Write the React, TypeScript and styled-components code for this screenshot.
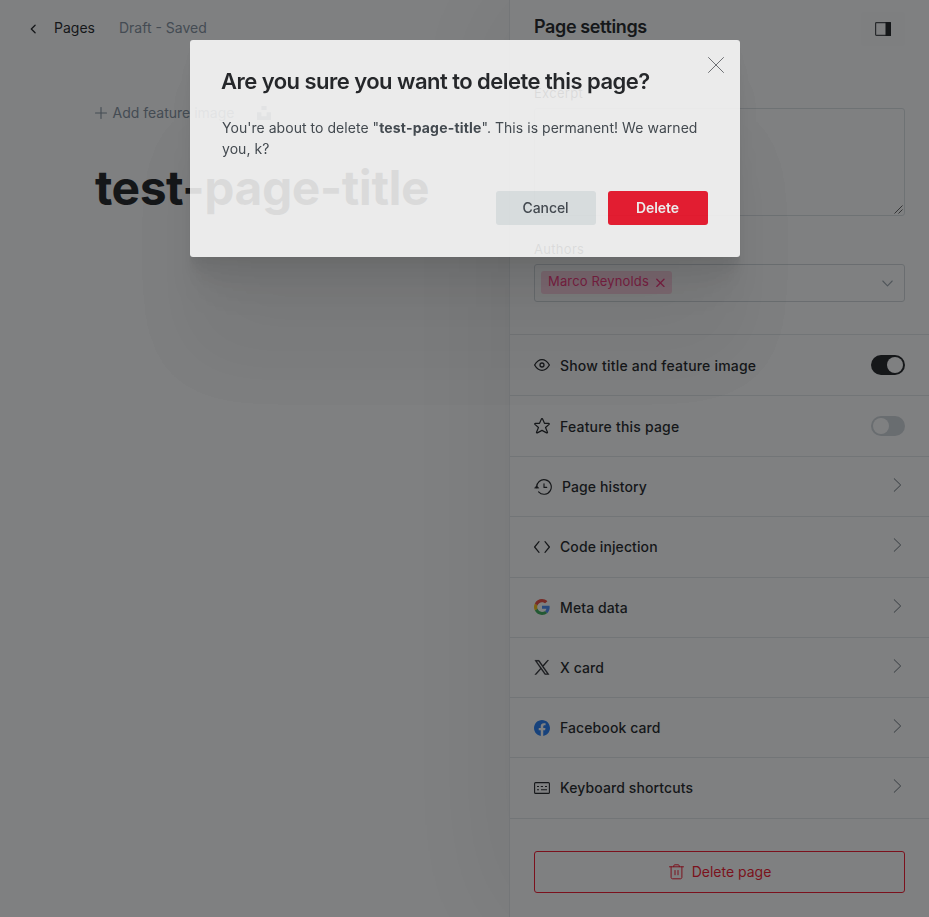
import React from 'react';
import styled, { createGlobalStyle } from 'styled-components';

const GlobalStyle = createGlobalStyle`
  *, *::before, *::after { box-sizing: border-box; }
  html, body { margin: 0; padding: 0; }
  body {
    font-family: Inter, "Liberation Sans", sans-serif;
    font-size: 14px;
    color: #15171a;
    background: #fff;
    overflow: hidden;
  }
  button { font-family: inherit; border: 0; padding: 0; margin: 0; }
  svg { display: block; flex: none; }
`;

const Screen = styled.div`
  display: flex;
  height: 917px;
  overflow: hidden;
`;

/* ---------- editor ---------- */

const Editor = styled.main`
  flex: 1;
  min-width: 0;
`;

const EditorHeader = styled.header`
  display: flex;
  align-items: center;
  height: 56px;
  padding: 0 0 2px 30px;
`;

const BackLink = styled.a`
  display: flex;
  align-items: center;
  gap: 17px;
  font-size: 14px;
  color: #15171a;
`;

const BackIcon = styled.svg`
  margin-top: 3px;
`;

const Status = styled.span`
  margin-left: 24px;
  font-size: 14px;
  color: #7c8b9a;
`;

const Canvas = styled.div`
  padding: 46px 0 0 95px;
  white-space: nowrap;
`;

const FeatureImageRow = styled.div`
  display: flex;
  align-items: center;
  height: 22px;
  font-size: 14px;
  color: #7c8b9a;
`;

const FeatureImageLabel = styled.span`
  margin: 0 23px 2px 5.5px;
`;

const PostTitle = styled.h1`
  margin: 34px 0 0;
  font-size: 48px;
  line-height: 60px;
  font-weight: 700;
  letter-spacing: -0.5px;
`;

/* ---------- settings panel ---------- */

const Panel = styled.aside`
  display: flex;
  flex-direction: column;
  width: 420px;
  flex: none;
  border-left: 1px solid #e6e9eb;
  background: #fff;
  box-shadow: 0 0 120px rgba(0, 0, 0, 0.09);
`;

const PanelHeader = styled.div`
  display: flex;
  justify-content: space-between;
  align-items: flex-start;
  height: 84px;
  padding: 12px 24px 0;
`;

const PanelTitle = styled.h4`
  margin: 0;
  font-size: 18px;
  line-height: 30px;
  font-weight: 600;
  letter-spacing: -0.38px;
`;

const PanelToggle = styled.div`
  display: flex;
  align-items: center;
  justify-content: center;
  width: 44px;
  height: 34px;
  border-radius: 3px;
  background: #fcfcfd;
`;

const Field = styled.div<{ $gap: number }>`
  display: flex;
  flex-direction: column;
  padding: 0 24px;
  margin-bottom: ${(p) => p.$gap}px;
`;

const Label = styled.label`
  font-size: 13px;
  line-height: 18px;
  height: 24px;
  font-weight: 400;
  letter-spacing: 0.3px;
`;

const ExcerptBox = styled.div`
  display: flex;
  align-items: flex-end;
  justify-content: flex-end;
  height: 108px;
  padding: 0 1px 1px 0;
  border: 1px solid #dadfe3;
  border-radius: 3px;
`;

const AuthorSelect = styled.div`
  display: flex;
  align-items: center;
  justify-content: space-between;
  height: 38px;
  padding: 0 11px 0 6px;
  border: 1px solid #d0d6da;
  border-radius: 3px;
`;

const Token = styled.span`
  display: flex;
  align-items: center;
  gap: 7px;
  height: 23px;
  margin-bottom: 1px;
  padding: 0 7px;
  border-radius: 3px;
  font-size: 13px;
  letter-spacing: 0.15px;
  color: #fb2d78;
  background: rgba(251, 45, 120, 0.22);
`;

const TokenName = styled.span`
  margin-top: -3px;
`;

const Rows = styled.ul`
  list-style: none;
  margin: 0;
  padding: 0;
  border-top: 1px solid #e3e6e8;
`;

const Row = styled.li<{ $h: number }>`
  display: flex;
  align-items: center;
  height: ${(p) => p.$h}px;
  padding: 0 24px;
  border-bottom: 1px solid #e3e6e8;
`;

const RowText = styled.span<{ $link?: boolean }>`
  flex: 1;
  margin-left: 10px;
  padding-top: ${(p) => (p.$link ? 1 : 2)}px;
  font-size: 14px;
  font-weight: 500;
  line-height: 20px;
  letter-spacing: ${(p) => (p.$link ? 0.1 : 0.2)}px;
`;

const RowArrow = styled.span`
  margin: -3px 3px 0 0;
`;

const Switch = styled.span<{ $on: boolean }>`
  display: flex;
  justify-content: ${(p) => (p.$on ? 'flex-end' : 'flex-start')};
  width: 34px;
  height: 20px;
  padding: 2px;
  border-radius: 10px;
  background: ${(p) => (p.$on ? '#15171a' : '#ced4d9')};
`;

const Knob = styled.span`
  width: 16px;
  height: 16px;
  border-radius: 50%;
  background: #fff;
`;

const DeletePage = styled.button`
  display: flex;
  align-items: center;
  justify-content: center;
  gap: 8px;
  height: 42px;
  margin: 32px 24px 0;
  padding-left: 1px;
  border: 1px solid #f50b23;
  border-radius: 3px;
  background: transparent;
  color: #f50b23;
  font-size: 14px;
`;

/* ---------- modal ---------- */

const Backdrop = styled.div`
  position: fixed;
  inset: 0;
  background: rgba(21, 23, 26, 0.55);
`;

const ModalLayer = styled.div`
  position: fixed;
  inset: 0;
  display: flex;
  justify-content: center;
  align-items: flex-start;
  padding-top: 40px;
  padding-left: 1px;
`;

const Modal = styled.section`
  position: relative;
  width: 550px;
  height: 217px;
  padding: 25px 32px 32px;
  border-radius: 3px;
  background: #fff;
  opacity: 0.845;
  box-shadow:
    0 2.8px 2.2px rgba(0, 0, 0, 0.02),
    0 6.7px 5.3px rgba(0, 0, 0, 0.028),
    0 12.5px 10px rgba(0, 0, 0, 0.035),
    0 22.3px 17.9px rgba(0, 0, 0, 0.042),
    0 41.8px 33.4px rgba(0, 0, 0, 0.05),
    0 100px 80px rgba(0, 0, 0, 0.07);
`;

const ModalTitle = styled.h2`
  margin: 0 0 0 -1px;
  font-size: 22px;
  line-height: 32px;
  font-weight: 600;
  letter-spacing: -0.53px;
  white-space: nowrap;
`;

const ModalText = styled.p`
  margin: 20px 0 0;
  font-size: 14px;
  line-height: 21px;
  letter-spacing: 0.04px;
  color: #394047;

  strong { letter-spacing: 0.18px; }
`;

const ModalActions = styled.div`
  display: flex;
  justify-content: flex-end;
  gap: 12px;
  margin-top: 32px;
`;

const ModalButton = styled.button<{ $danger?: boolean }>`
  width: 100px;
  height: 34px;
  padding: 0 1px 1px 0;
  border-radius: 3px;
  font-size: 14px;
  font-weight: ${(p) => (p.$danger ? 600 : 500)};
  letter-spacing: -0.1px;
  color: ${(p) => (p.$danger ? '#fff' : '#394047')};
  background: ${(p) => (p.$danger ? '#f50b23' : '#e8edef')};
`;

const CloseButton = styled.span`
  position: absolute;
  top: 17px;
  right: 16px;
`;

/* ---------- icons ---------- */

const line = { fill: 'none', stroke: 'currentColor', strokeLinecap: 'round', strokeLinejoin: 'round' } as const;

const EyeIcon = () => (
  <svg width="16" height="16" viewBox="0 0 24 24" {...line} strokeWidth="1.900">
    <path d="M23.100 12s-4.700-8-11.100-8S.9 12 .9 12s4.700 8 11.100 8 11.100-8 11.100-8z" />
    <circle cx="12" cy="12" r="3" />
  </svg>
);

const StarIcon = () => (
  <svg width="16" height="16" viewBox="0 0 24 24" {...line} strokeWidth="1.800">
    <path d="M12.700 1.300l3 6.700h6.300c.9 0 1.200 1 .600 1.600l-5.300 4.700 2.900 7c.3.800-.500 1.400-1.200 1L12 18.600l-7 3.700c-.7.4-1.500-.2-1.200-1l2.900-7L1.400 9.600C.8 9 1.100 8 2 8h6.300l3-6.700c.3-.6 1.100-.6 1.400 0z" />
  </svg>
);

const HistoryIcon = () => (
  <svg width="18" height="16" viewBox="0 0 18 16" {...line} strokeWidth="1.150">
    <path d="M2.700 8.600A7.300 7.300 0 1 1 4.600 12.900" />
    <path d="M.800 8.900l1.800-2.100 2 2.100z" fill="currentColor" strokeWidth=".6" />
    <path d="M10 4.700v3.700h2.700" />
  </svg>
);

const CodeIcon = () => (
  <svg width="16" height="16" viewBox="0 0 16 16" {...line} strokeWidth="1.2">
    <path d="M5 2.700L.600 8 5 13.300M11 2.700L15.400 8 11 13.300" />
  </svg>
);

const GoogleIcon = () => (
  <svg width="16" height="16" viewBox="0 0 24 24">
    <path fill="#4285f4" d="M23.500 12.300c0-.9-.1-1.500-.2-2.200H12v4.400h6.600c-.1 1.100-.8 2.700-2.400 3.800l3.700 2.900c2.300-2.100 3.600-5.200 3.600-8.900z" />
    <path fill="#34a853" d="M12 24c3.200 0 6-1.100 7.900-2.900l-3.800-2.900c-1 .7-2.400 1.200-4.100 1.200-3.200 0-5.900-2.100-6.800-5L1.300 17.400C3.300 21.300 7.300 24 12 24z" />
    <path fill="#fbbc05" d="M5.200 14.400c-.3-.8-.4-1.600-.4-2.400s.2-1.700.4-2.400L1.300 6.600C.5 8.200 0 10.100 0 12s.500 3.800 1.300 5.400l3.900-3z" />
    <path fill="#ea4335" d="M12 4.700c2.300 0 3.800 1 4.700 1.800l3.400-3.300C18 1.200 15.200 0 12 0 7.300 0 3.300 2.700 1.300 6.600l3.900 3c1-2.900 3.700-4.900 6.800-4.900z" />
  </svg>
);

const XIcon = () => (
  <svg width="16" height="16" viewBox="-1.500 -2.300 27 27" fill="currentColor" stroke="currentColor" strokeWidth=".7">
    <path d="M14.258 10.152L23.176 0h-2.113l-7.747 8.813L7.133 0H0l9.352 13.328L0 23.973h2.113l8.176-9.309 6.531 9.309h7.133zm-2.895 3.293l-.949-1.328L2.875 1.560h3.246l6.086 8.523.945 1.328 7.910 11.078h-3.246z" />
  </svg>
);

const FacebookIcon = () => (
  <svg width="16" height="16" viewBox="0 0 24 24">
    <path fill="#1977f3" d="M24 12.070C24 5.400 18.600 0 12 0S0 5.400 0 12.070C0 18.100 4.400 23.100 10.130 24v-8.440H7.080v-3.490h3.050V9.410c0-3.020 1.790-4.690 4.530-4.690 1.310 0 2.680.24 2.680.24v2.970h-1.510c-1.490 0-1.960.93-1.960 1.880v2.260h3.330l-.53 3.490h-2.800V24C19.600 23.100 24 18.100 24 12.070z" />
  </svg>
);

const KeyboardIcon = () => (
  <svg width="16" height="16" viewBox="0 0 16 16" {...line} strokeWidth="1.100">
    <rect x=".6" y="2.600" width="14.800" height="10.800" rx="1" />
    <path strokeLinecap="butt" d="M3 6.500h2M6.800 6.500h2.200M11 6.500h2M3 9.700h2M7 9.700h6" />
  </svg>
);

const TrashIcon = () => (
  <svg width="15" height="16" viewBox="0 0 15 16" {...line} strokeWidth="1">
    <path d="M.500 2.800h14M2.100 2.800v10.500c0 .9.600 1.500 1.500 1.500h7.800c.9 0 1.500-.6 1.500-1.500V2.800M4.700 2.700V1.900c0-.6.500-1.100 1.100-1.100h3.400c.6 0 1.100.5 1.100 1.100v.8M6 6.500v4.300M9 6.500v4.300" />
  </svg>
);

const ChevronRight = () => (
  <svg width="9" height="14" viewBox="0 0 9 14" {...line} stroke="#5d6770" strokeWidth="1">
    <path d="M1.200.700L7.700 7l-6.500 6.300" />
  </svg>
);

const linkRows = [
  { text: 'Page history', icon: <HistoryIcon /> },
  { text: 'Code injection', icon: <CodeIcon /> },
  { text: 'Meta data', icon: <GoogleIcon /> },
  { text: 'X card', icon: <XIcon /> },
  { text: 'Facebook card', icon: <FacebookIcon /> },
  { text: 'Keyboard shortcuts', icon: <KeyboardIcon /> },
];

export default function App() {
  return (
    <>
      <GlobalStyle />
      <Screen>
        <Editor>
          <EditorHeader>
            <BackLink>
              <BackIcon width="7" height="10" viewBox="0 0 7 10" {...line} strokeWidth="1.300">
                <path d="M5.100 1.200L1.300 5l3.800 3.800" />
              </BackIcon>
              Pages
            </BackLink>
            <Status>Draft - Saved</Status>
          </EditorHeader>
          <Canvas>
            <FeatureImageRow>
              <svg width="12" height="12" viewBox="0 0 12 12" {...line} strokeWidth="1.100">
                <path d="M6 .5v11M.5 6h11" />
              </svg>
              <FeatureImageLabel>Add feature image</FeatureImageLabel>
              <svg width="14" height="14" viewBox="0 0 14 14" fill="currentColor">
                <path d="M4.400 0h5.200v4H4.400zM0 6.200h4.400v4h5.200v-4H14V14H0z" />
              </svg>
            </FeatureImageRow>
            <PostTitle>test-page-title</PostTitle>
          </Canvas>
        </Editor>

        <Panel>
          <PanelHeader>
            <PanelTitle>Page settings</PanelTitle>
            <PanelToggle>
              <svg width="16" height="14" viewBox="0 0 16 14">
                <rect x=".6" y=".6" width="14.800" height="12.800" rx=".8" fill="none" stroke="#3c3f43" strokeWidth="1.200" />
                <rect x="10.500" y="0" width="5.500" height="14" rx=".6" fill="#15171a" />
              </svg>
            </PanelToggle>
          </PanelHeader>
          <Field $gap={24}>
            <Label>Excerpt</Label>
            <ExcerptBox>
              <svg width="9" height="9" viewBox="0 0 9 9" fill="none" stroke="#444" strokeWidth=".9">
                <path d="M.5 8.500l8-8M4.500 8.500l4-4" />
              </svg>
            </ExcerptBox>
          </Field>
          <Field $gap={32}>
            <Label>Authors</Label>
            <AuthorSelect>
              <Token>
                <TokenName>Marco Reynolds</TokenName>
                <svg width="9" height="9" viewBox="0 0 9 9" {...line} strokeWidth="1.300">
                  <path d="M.8 1.300l7.200 7.200M8 1.300L.8 8.500" />
                </svg>
              </Token>
              <svg width="11" height="7" viewBox="0 0 11 7" {...line} stroke="#98a2aa" strokeWidth="1.100">
                <path d="M.8 1l4.700 4.800L10.200 1" />
              </svg>
            </AuthorSelect>
          </Field>
          <Rows>
            <Row $h={61}>
              <EyeIcon />
              <RowText>Show title and feature image</RowText>
              <Switch $on><Knob /></Switch>
            </Row>
            <Row $h={61}>
              <StarIcon />
              <RowText>Feature this page</RowText>
              <Switch $on={false}><Knob /></Switch>
            </Row>
            {linkRows.map((r) => (
              <Row key={r.text} $h={60.28}>
                {r.icon}
                <RowText $link>{r.text}</RowText>
                <RowArrow><ChevronRight /></RowArrow>
              </Row>
            ))}
          </Rows>
          <DeletePage>
            <TrashIcon />
            Delete page
          </DeletePage>
        </Panel>
      </Screen>

      <Backdrop />
      <ModalLayer>
        <Modal>
          <ModalTitle>Are you sure you want to delete this page?</ModalTitle>
          <ModalText>
            You're about to delete "<strong>test-page-title</strong>". This is permanent! We warned you, k?
          </ModalText>
          <ModalActions>
            <ModalButton>Cancel</ModalButton>
            <ModalButton $danger>Delete</ModalButton>
          </ModalActions>
          <CloseButton>
            <svg width="16" height="16" viewBox="0 0 16 16" {...line} stroke="#6b6e72" strokeWidth="1">
              <path d="M.5.500l15 15M15.500.500l-15 15" />
            </svg>
          </CloseButton>
        </Modal>
      </ModalLayer>
    </>
  );
}
